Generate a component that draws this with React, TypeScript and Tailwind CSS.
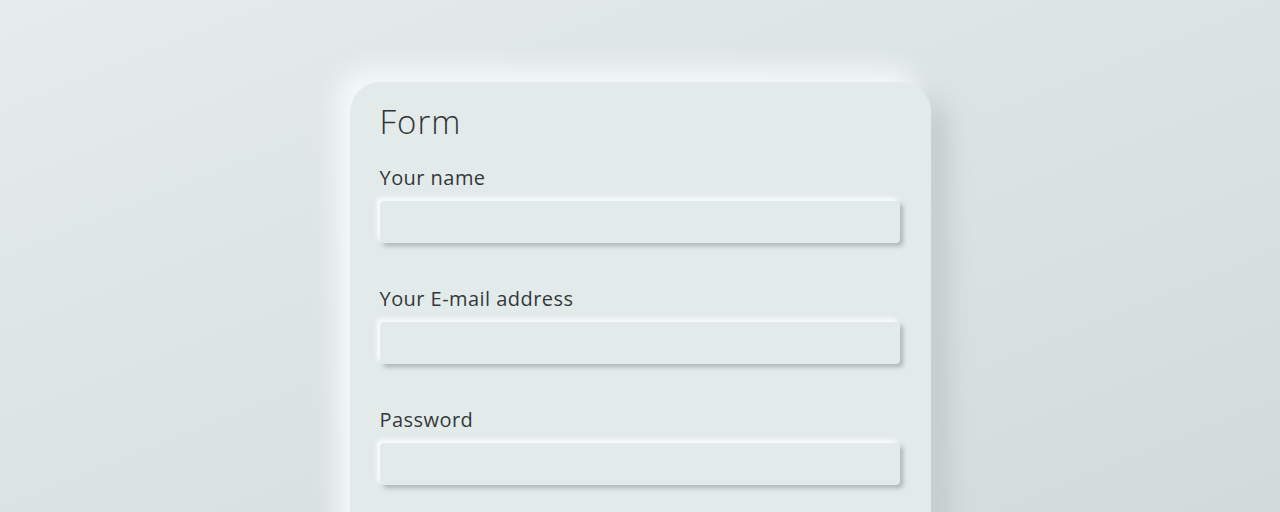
export default function App() {
  const fields = [
    { label: "Your name", type: "text" },
    { label: "Your E-mail address", type: "email" },
    { label: "Password", type: "password" },
  ];

  return (
    <div
      className="min-h-screen h-[512px] overflow-hidden bg-gradient-to-br from-[#e5eceb] to-[#d2dbdb] flex justify-center pt-[82px]"
      style={{ fontFamily: '"Open Sans", "Liberation Sans", sans-serif' }}
    >
      {/* Card */}
      <div className="w-[581px] h-[520px] rounded-[30px] bg-[#e3ebea] shadow-[-12px_-12px_24px_#f6fafa,14px_14px_28px_#bcc6c6] px-[30px] pt-[16px]">
        <h1 className="text-[33px] leading-[48px] font-light text-[#2f3435] tracking-[1px]">Form</h1>

        <form className="mt-[18px] flex flex-col gap-[42px]">
          {fields.map((f) => (
            <div key={f.label} className="flex flex-col">
              <label className="text-[20px] leading-[28px] text-[#33393a] tracking-[0.45px]">{f.label}</label>
              <input
                type={f.type}
                className="mt-[9px] h-[42px] w-[520px] rounded-[4px] bg-[#e3ebea] outline-none shadow-[-3px_-3px_4px_#fbfdfd,3px_3px_5px_#aab4b4]"
              />
            </div>
          ))}
        </form>
      </div>
    </div>
  );
}
